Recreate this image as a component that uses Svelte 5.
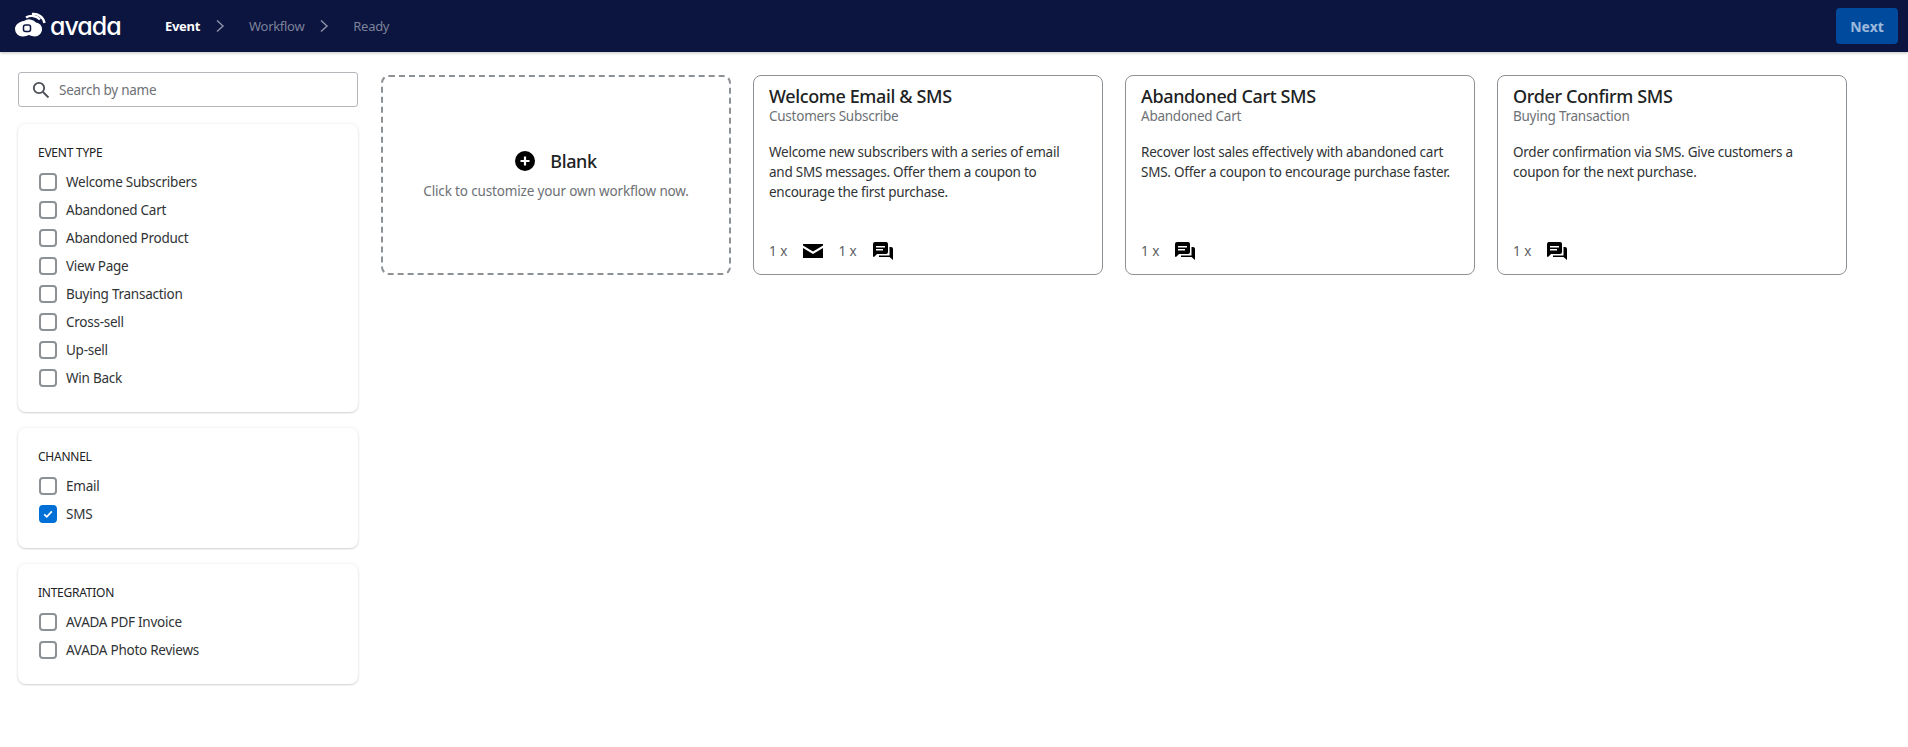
<script>
	const filterGroups = [
		{
			title: 'Event type',
			items: [
				{ label: 'Welcome Subscribers' },
				{ label: 'Abandoned Cart' },
				{ label: 'Abandoned Product' },
				{ label: 'View Page' },
				{ label: 'Buying Transaction' },
				{ label: 'Cross-sell' },
				{ label: 'Up-sell' },
				{ label: 'Win Back' }
			]
		},
		{
			title: 'Channel',
			items: [{ label: 'Email' }, { label: 'SMS', checked: true }]
		},
		{
			title: 'Integration',
			items: [{ label: 'AVADA PDF Invoice' }, { label: 'AVADA Photo Reviews' }]
		}
	];

	const templates = [
		{
			title: 'Welcome Email & SMS',
			event: 'Customers Subscribe',
			text: 'Welcome new subscribers with a series of email and SMS messages. Offer them a coupon to encourage the first purchase.',
			channels: ['email', 'sms']
		},
		{
			title: 'Abandoned Cart SMS',
			event: 'Abandoned Cart',
			text: 'Recover lost sales effectively with abandoned cart SMS. Offer a coupon to encourage purchase faster.',
			channels: ['sms']
		},
		{
			title: 'Order Confirm SMS',
			event: 'Buying Transaction',
			text: 'Order confirmation via SMS. Give customers a coupon for the next purchase.',
			channels: ['sms']
		}
	];
</script>

<header class="topbar">
	<div class="logo">
		<svg width="34" height="30" viewBox="0 0 34 30">
			<path d="M11 10a9 9 0 0 1 12 1.500a6.500 6.500 0 0 1 6 7c-.3 4-3.500 7-7 7c-2.500 0-4-1-6-1.500c-2 .5-3.500 1.500-6 1.500a7.500 7.500 0 0 1-8-7.500c0-4 4-7.500 9-8z" fill="#fff" />
			<path d="M13 6.500a11 11 0 0 1 14 2" fill="none" stroke="#fff" stroke-width="2.400" />
			<path d="M19 3a11 11 0 0 1 12.500 9" fill="none" stroke="#fff" stroke-width="2.400" />
			<rect x="10.500" y="14" width="7" height="6.500" rx="2" fill="none" stroke="#0b1540" stroke-width="1.500" />
		</svg>
		<span class="logo-text">avada</span>
	</div>
	<nav class="steps">
		<span class="step active">Event</span>
		<svg class="chevron" width="10" height="14" viewBox="0 0 10 14"><path d="M2 1.500L8 7l-6 5.500" /></svg>
		<span class="step">Workflow</span>
		<svg class="chevron" width="10" height="14" viewBox="0 0 10 14"><path d="M2 1.500L8 7l-6 5.500" /></svg>
		<span class="step">Ready</span>
	</nav>
	<button class="next">Next</button>
</header>

<main class="page">
	<aside class="sidebar">
		<div class="search">
			<svg width="18" height="18" viewBox="0 0 18 18">
				<circle cx="7" cy="7" r="5.200" />
				<path d="M11 11l5.500 5.500" />
			</svg>
			<span>Search by name</span>
		</div>
		{#each filterGroups as group}
			<section class="filter">
				<h3>{group.title}</h3>
				{#each group.items as item}
					<div class="option">
						<span class="box" class:checked={item.checked}>
							{#if item.checked}
								<svg width="12" height="12" viewBox="0 0 12 12"><path d="M2.200 6.300l2.600 2.500 5-5.400" /></svg>
							{/if}
						</span>
						<span>{item.label}</span>
					</div>
				{/each}
			</section>
		{/each}
	</aside>

	<div class="grid">
		<div class="card blank">
			<div class="blank-title">
				<svg width="20" height="20" viewBox="0 0 20 20">
					<circle cx="10" cy="10" r="10" fill="#000" />
					<path d="M10 5.500v9M5.500 10h9" stroke="#fff" stroke-width="2.200" />
				</svg>
				<span>Blank</span>
			</div>
			<p>Click to customize your own workflow now.</p>
		</div>
		{#each templates as tpl}
			<div class="card">
				<h2>{tpl.title}</h2>
				<div class="event">{tpl.event}</div>
				<p class="text">{tpl.text}</p>
				<div class="channels">
					{#each tpl.channels as channel}
						<span class="count">1 x</span>
						{#if channel === 'email'}
							<svg class="ch-icon" width="20" height="20" viewBox="0 0 20 20">
								<path d="M0 3h20v1.600l-10 6-10-6zM0 7l10 6 10-6v10H0z" fill="#000" />
							</svg>
						{:else}
							<svg class="ch-icon" width="20" height="20" viewBox="0 0 20 20">
								<path d="M2 1h11a2 2 0 0 1 2 2v8a2 2 0 0 1-2 2H4l-3 3a1 1 0 0 1-1-1V3a2 2 0 0 1 2-2zM3 5v1.500h9V5zM3 8v1.500h7V8z" fill="#000" fill-rule="evenodd" />
								<path d="M16.500 6H18a2 2 0 0 1 2 2v11l-3.500-3H6v-1.500h10.500z" fill="#000" />
							</svg>
						{/if}
					{/each}
				</div>
			</div>
		{/each}
	</div>
</main>

<style>
	:global(body) {
		background: #fff;
		font-family: "Noto Sans", "Open Sans", sans-serif;
		font-size: 13.500px;
		letter-spacing: -0.25px;
		color: #202223;
	}

	.topbar {
		display: flex;
		align-items: center;
		height: 52px;
		background: #0b1540;
		box-shadow: 0 1px 3px rgba(0, 0, 0, 0.25);
		padding: 0 10px 0 13px;
	}

	.logo {
		display: flex;
		align-items: center;
		gap: 3px;
		width: 152px;
	}

	.logo-text {
		font-family: Inter, sans-serif;
		font-feature-settings: "cv11";
		font-size: 25px;
		font-weight: 500;
		color: #fff;
		letter-spacing: -1px;
	}

	.steps {
		display: flex;
		align-items: center;
	}

	.step {
		color: #7c8299;
		font-size: 13px;
		letter-spacing: -0.3px;
	}

	.step.active {
		color: #fff;
		font-weight: 700;
	}

	.chevron {
		margin: 0 24px 0 15px;
		fill: none;
		stroke: #8b90a5;
		stroke-width: 1.500;
	}

	.next {
		margin-left: auto;
		width: 62px;
		height: 36px;
		border: none;
		border-radius: 4px;
		background: #004a9e;
		color: #9db9dc;
		font: 700 14px "Noto Sans", sans-serif;
	}

	.page {
		display: flex;
		align-items: flex-start;
		gap: 23px;
		padding: 20px 18px;
	}

	.sidebar {
		display: flex;
		flex-direction: column;
		gap: 16px;
		width: 340px;
		flex: none;
	}

	.search {
		display: flex;
		align-items: center;
		gap: 9px;
		height: 35px;
		box-sizing: border-box;
		margin-bottom: 1px;
		padding: 0 13px;
		border: 1px solid #b3b6ba;
		border-radius: 3px;
		color: #6d7175;
	}

	.search svg {
		fill: none;
		stroke: #4a4f55;
		stroke-width: 1.800;
	}

	.filter {
		padding: 19px 20px 20px;
		border-radius: 8px;
		background: #fff;
		box-shadow: 0 0 4px rgba(23, 24, 24, 0.06), 0 1px 2px rgba(0, 0, 0, 0.16);
	}

	h3 {
		margin: 0 0 5px;
		height: 20px;
		line-height: 20px;
		font-size: 12px;
		font-weight: 400;
		text-transform: uppercase;
	}

	.option {
		display: flex;
		align-items: center;
		gap: 9px;
		height: 28px;
		color: #303335;
	}

	.box {
		display: flex;
		align-items: center;
		justify-content: center;
		width: 18px;
		height: 18px;
		box-sizing: border-box;
		margin-left: 1px;
		border: 2px solid #8c9196;
		border-radius: 4px;
	}

	.box.checked {
		background: #006fd6;
		border-color: #006fd6;
	}

	.box svg {
		fill: none;
		stroke: #fff;
		stroke-width: 1.800;
	}

	.grid {
		display: flex;
		gap: 22px;
		align-items: flex-start;
		margin-top: 3px;
	}

	.card {
		display: flex;
		flex-direction: column;
		width: 350px;
		height: 200px;
		box-sizing: border-box;
		padding: 9px 15px 0;
		border: 1px solid #8c9196;
		border-radius: 8px;
	}

	.card h2 {
		margin: 0;
		font-size: 18px;
		line-height: 23px;
		font-weight: 500;
		letter-spacing: -0.37px;
	}

	.event {
		line-height: 17px;
		color: #6d7175;
	}

	.text {
		margin: 17px 0 0;
		padding-right: 4px;
		line-height: 20px;
		color: #303335;
	}

	.channels {
		display: flex;
		align-items: center;
		margin-top: auto;
		margin-bottom: 13px;
		color: #5c5f62;
	}

	.count {
		margin-right: 16px;
		letter-spacing: 0;
	}

	.ch-icon {
		margin-right: 15px;
	}

	.blank {
		align-items: center;
		justify-content: center;
		padding: 0 0 2px;
		border: 2px dashed #8c9196;
	}

	.blank-title {
		display: flex;
		align-items: center;
		gap: 15px;
		font-size: 18px;
		font-weight: 500;
		letter-spacing: -0.37px;
	}

	.blank p {
		margin: 9px 0 0;
		letter-spacing: -0.15px;
		color: #6d7175;
	}
</style>
